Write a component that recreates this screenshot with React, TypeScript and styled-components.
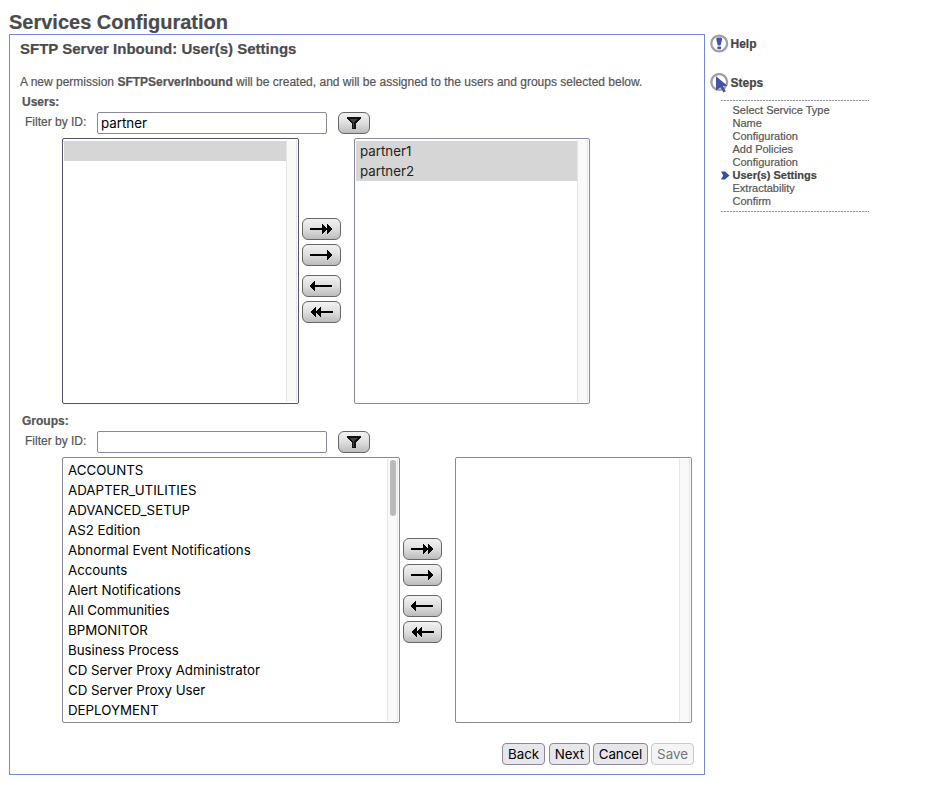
import React from 'react';
import styled, { createGlobalStyle, css } from 'styled-components';

const GlobalStyle = createGlobalStyle`
  *, *::before, *::after { box-sizing: border-box; }
  body {
    margin: 0;
    background: #fff;
    color: #555;
    font: 12px/14px "Liberation Sans", Arial, sans-serif;
    -webkit-text-stroke: 0.2px currentColor;
  }
`;

const Page = styled.div`
  padding: 11px 0 0 9px;
  width: 930px;
  height: 805px;
`;

const PageTitle = styled.h1`
  margin: 0;
  height: 23px;
  font-size: 20px;
  line-height: 23px;
  color: #4b4b4b;
`;

const Columns = styled.div`
  display: flex;
  align-items: flex-start;
`;

const Panel = styled.main`
  display: flex;
  flex-direction: column;
  width: 696px;
  height: 741px;
  padding: 5px 10px 9px;
  border: 1px solid #7488d4;
`;

const PanelTitle = styled.h2`
  margin: 0 0 18px;
  font-size: 15px;
  line-height: 17px;
  color: #4b4b4b;
`;

const Intro = styled.p`
  margin: 0 0 6px;
  white-space: nowrap;
`;

const Picker = styled.section<{ $gap: number }>`
  margin-bottom: ${(p) => p.$gap}px;
`;

const PickerTitle = styled.h3`
  margin: 0 0 3px 2px;
  font-size: 12px;
  line-height: 14px;
`;

const FilterRow = styled.div`
  display: flex;
  align-items: center;
  height: 22px;
  margin: 0 0 4px 5px;
`;

const FilterLabel = styled.label`
  width: 72px;
  height: 16px;
`;

const FilterInput = styled.input`
  width: 230px;
  height: 22px;
  margin: 0 11px 0 0;
  padding: 0 3px;
  border: 1px solid #8b879c;
  border-radius: 2px;
  background: #fff;
  color: #000;
  font: 13.333px Inter, sans-serif;
  -webkit-text-stroke: 0;
  outline: none;
`;

const GlossyButton = styled.button<{ $width: number }>`
  display: flex;
  align-items: center;
  justify-content: center;
  width: ${(p) => p.$width}px;
  height: 22px;
  padding: 0;
  border: 1px solid #666;
  border-radius: 6px;
  background: linear-gradient(#f2f2f2, #dedede 50%, #bcbcbc);
  color: #000;
`;

const Lists = styled.div`
  display: flex;
  margin-left: 42px;
`;

const ListBox = styled.div<{ $width: number; $dark?: boolean }>`
  display: flex;
  width: ${(p) => p.$width}px;
  height: 266px;
  padding: 1px 0 1px 1px;
  border: 1px solid ${(p) => (p.$dark ? '#55536a' : '#8b879c')};
  border-radius: 2px;
  background: #fff;
`;

const Options = styled.ul`
  flex: 1;
  margin: 0;
  padding: 1px 0 0;
  list-style: none;
  overflow: hidden;
`;

const Option = styled.li<{ $selected?: boolean }>`
  height: 20px;
  padding-left: 4px;
  font: 13.3px/20px Inter, sans-serif;
  -webkit-text-stroke: 0;
  color: #000;
  white-space: nowrap;
  ${(p) =>
    p.$selected &&
    css`
      background: #d6d6d6;
      color: #222;
    `}
`;

const ScrollTrack = styled.div`
  width: 11px;
  margin-right: 1px;
  padding: 1px 0 0 2px;
  border: solid #e6e6e6;
  border-width: 0 1px;
  background: #f9f9f9;
`;

const ScrollThumb = styled.div`
  width: 6px;
  height: 56px;
  border-radius: 3px;
  background: #bababa;
`;

const Movers = styled.div<{ $top: number; $right: number }>`
  display: flex;
  flex-direction: column;
  gap: 4px;
  padding: ${(p) => `${p.$top}px ${p.$right}px 0 3px`};

  & > :nth-child(3) { margin-top: 5px; }
`;

const Footer = styled.footer`
  display: flex;
  justify-content: flex-end;
  margin-top: auto;
`;

const FormButton = styled.button<{ $width: number; $after?: number }>`
  width: ${(p) => p.$width}px;
  height: 22px;
  margin: 0 ${(p) => p.$after ?? 0}px 0 0;
  padding: 0;
  border: 1px solid #8b879c;
  border-radius: 4px;
  background: #e7e7eb;
  color: #000;
  font: 13.333px Inter, sans-serif;
  -webkit-text-stroke: 0;

  &:disabled {
    border-color: #c9c8d0;
    background: #f4f4f6;
    color: #757577;
  }
`;

const Sidebar = styled.aside`
  padding-left: 5px;
`;

const SideHeading = styled.div<{ $gap: number }>`
  display: flex;
  align-items: center;
  gap: 1.5px;
  height: 20px;
  margin-bottom: ${(p) => p.$gap}px;
  font-weight: bold;
  color: #444;
`;

const StepList = styled.ol`
  width: 148px;
  margin: 0 0 0 11px;
  padding: 4px 0;
  background:
    repeating-linear-gradient(90deg, #999 0 2px, #e4e4e4 2px 3px) top / 100% 1px no-repeat,
    repeating-linear-gradient(90deg, #999 0 2px, #e4e4e4 2px 3px) bottom / 100% 1px no-repeat;
  list-style: none;
`;

const Step = styled.li<{ $current?: boolean }>`
  display: flex;
  align-items: center;
  height: 13px;
  padding-left: ${(p) => (p.$current ? 0 : 11.5)}px;
  gap: 2.5px;
  font-size: 11px;
  line-height: 13px;
  font-weight: ${(p) => (p.$current ? 'bold' : 'normal')};
  color: ${(p) => (p.$current ? '#444' : '#555')};
`;

const HelpIcon = () => (
  <svg width="19" height="20" viewBox="0 0 19 20">
    <circle cx="9.2" cy="9.5" r="7.9" fill="#fff" stroke="#a0a0a4" strokeWidth="2.3" />
    <path d="M6.2 5q0-1.5 1.5-1.5h3q1.5 0 1.5 1.5l-1.6 6.5H7.8z" fill="#4453a6" />
    <rect x="7.2" y="12.4" width="4" height="2.8" rx="1.3" fill="#4453a6" />
  </svg>
);

const StepsIcon = () => (
  <svg width="19" height="20" viewBox="0 0 19 20">
    <circle cx="9.2" cy="9" r="7.9" fill="#fff" stroke="#a0a0a4" strokeWidth="2.3" />
    <path d="M6 3.2l11.5 9.6-4.6.5 3 5-2.4 1.2-3-5L6 17.6z" fill="#4453a6" />
  </svg>
);

const CurrentMark = () => (
  <svg width="9" height="9" viewBox="0 0 9 9">
    <path d="M0 .5h4l4.5 4L4 8.5H0l2.2-4z" fill="#315294" />
  </svg>
);

const FunnelIcon = () => (
  <svg width="14" height="14" viewBox="0 0 14 14" shapeRendering="crispEdges">
    <path d="M0 1h14v2h-1v1h-1v1h-1v1h-1v1H9v6H5V7H4V6H3V5H2V4H1V3H0z" fill="#111" />
    <path d="M3 3h7v1H9v1H8v1H7v6H6V6H5V5H4V4H3z" fill="#444" />
  </svg>
);

const ArrowSvg = styled.svg<{ $nudge: boolean }>`
  margin-right: ${(p) => (p.$nudge ? -1 : 1)}px;
`;

type ArrowProps = { double?: boolean; left?: boolean };

const HEAD = 'V0h1v1h1v1h1v1h1v1h1v2h-1v1h-1v1h-1v1h-1v1h-1';

const Arrow = ({ double, left }: ArrowProps) => (
  <ArrowSvg $nudge={!!double && !!left} width="22" height="10" viewBox="0 0 22 10" shapeRendering="crispEdges">
    <g transform={left ? 'translate(22 0) scale(-1 1)' : undefined}>
      <path d={`M0 4h17${HEAD}V6H0z`} />
      {double && <path d={`M12 4${HEAD}z`} />}
    </g>
  </ArrowSvg>
);

const MoveButtons = ({ top, right }: { top: number; right: number }) => (
  <Movers $top={top} $right={right}>
    <GlossyButton $width={39} aria-label="Add all"><Arrow double /></GlossyButton>
    <GlossyButton $width={39} aria-label="Add"><Arrow /></GlossyButton>
    <GlossyButton $width={39} aria-label="Remove"><Arrow left /></GlossyButton>
    <GlossyButton $width={39} aria-label="Remove all"><Arrow double left /></GlossyButton>
  </Movers>
);

type SelectProps = { items: string[]; width: number; selected?: boolean; dark?: boolean; thumb?: boolean };

const Select = ({ items, width, selected, dark, thumb }: SelectProps) => (
  <ListBox $width={width} $dark={dark}>
    <Options>
      {items.map((item, i) => (
        <Option key={i} $selected={selected}>{item}</Option>
      ))}
    </Options>
    <ScrollTrack>{thumb && <ScrollThumb />}</ScrollTrack>
  </ListBox>
);

const Filter = ({ value }: { value: string }) => (
  <FilterRow>
    <FilterLabel>Filter by ID:</FilterLabel>
    <FilterInput defaultValue={value} />
    <GlossyButton $width={32} aria-label="Filter"><FunnelIcon /></GlossyButton>
  </FilterRow>
);

const GROUPS = [
  'ACCOUNTS', 'ADAPTER_UTILITIES', 'ADVANCED_SETUP', 'AS2 Edition', 'Abnormal Event Notifications',
  'Accounts', 'Alert Notifications', 'All Communities', 'BPMONITOR', 'Business Process',
  'CD Server Proxy Administrator', 'CD Server Proxy User', 'DEPLOYMENT',
];

const STEPS = [
  'Select Service Type', 'Name', 'Configuration', 'Add Policies',
  'Configuration', 'User(s) Settings', 'Extractability', 'Confirm',
];
const CURRENT_STEP = 5;

export default function App() {
  return (
    <Page>
      <GlobalStyle />
      <PageTitle>Services Configuration</PageTitle>
      <Columns>
        <Panel>
          <PanelTitle>SFTP Server Inbound: User(s) Settings</PanelTitle>
          <Intro>
            A new permission <b>SFTPServerInbound</b> will be created, and will be assigned to the users and
            groups selected below.
          </Intro>
          <Picker $gap={10}>
            <PickerTitle>Users:</PickerTitle>
            <Filter value="partner" />
            <Lists>
              <Select items={['']} width={237} selected dark />
              <MoveButtons top={80} right={13} />
              <Select items={['partner1', 'partner2']} width={236} selected />
            </Lists>
          </Picker>
          <Picker $gap={0}>
            <PickerTitle>Groups:</PickerTitle>
            <Filter value="" />
            <Lists>
              <Select items={GROUPS} width={338} thumb />
              <MoveButtons top={81} right={13} />
              <Select items={[]} width={237} />
            </Lists>
          </Picker>
          <Footer>
            <FormButton $width={43} $after={4}>Back</FormButton>
            <FormButton $width={41} $after={3}>Next</FormButton>
            <FormButton $width={55} $after={3}>Cancel</FormButton>
            <FormButton $width={43} disabled>Save</FormButton>
          </Footer>
        </Panel>
        <Sidebar>
          <SideHeading $gap={19}><HelpIcon />Help</SideHeading>
          <SideHeading $gap={7}><StepsIcon />Steps</SideHeading>
          <StepList>
            {STEPS.map((step, i) => (
              <Step key={i} $current={i === CURRENT_STEP}>
                {i === CURRENT_STEP && <CurrentMark />}
                {step}
              </Step>
            ))}
          </StepList>
        </Sidebar>
      </Columns>
    </Page>
  );
}
